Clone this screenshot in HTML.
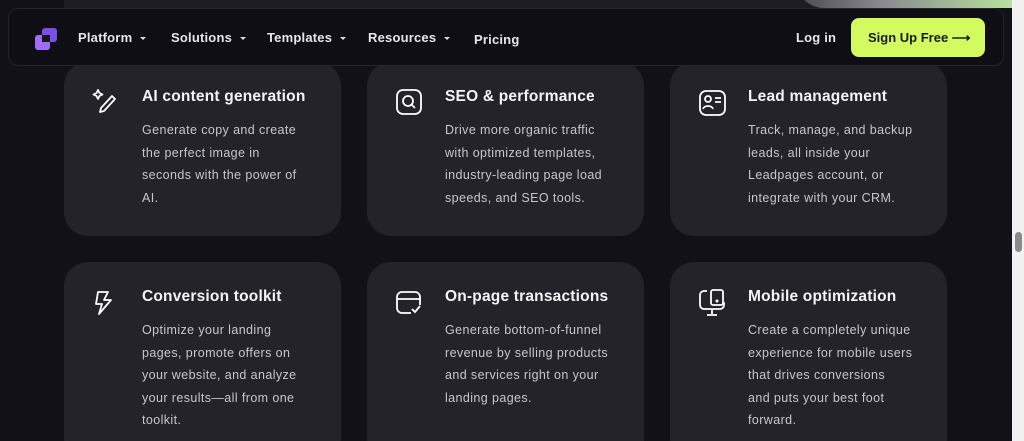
<!DOCTYPE html>
<html><head><style>
*{margin:0;padding:0;box-sizing:border-box}
html,body{width:1024px;height:441px;overflow:hidden;background:#121117;font-family:"Liberation Sans",sans-serif;position:relative}
.top{position:absolute;left:64px;top:0;width:884px;height:8px;background:#1e1d24}
.img{position:absolute;left:732px;top:-20px;width:216px;height:28px;border-radius:0 0 0 60px;background:linear-gradient(90deg,#4a4950,#8a8a90 40%,#b8e0a0)}
.nav{position:absolute;left:8px;top:8px;width:996px;height:58px;background:#0f0e14;border:1px solid #26252c;border-radius:10px;z-index:5}
.nav a{position:absolute;top:21px;color:#e6e6ea;font-size:13px;font-weight:bold;letter-spacing:.2px}
.caret{display:inline-block;margin-left:8px;border-left:3px solid transparent;border-right:3px solid transparent;border-top:3px solid #ddd;vertical-align:middle}
.btn{position:absolute;left:842px;top:9px;width:134px;height:39px;background:#d2fb60;border-radius:8px;color:#1a1a1a;font-size:13px;font-weight:bold;line-height:39px;padding-left:17px}
.card{position:absolute;width:277px;height:174px;background:#242329;border-radius:24px}
.card h3{position:absolute;left:78px;top:26px;color:#f4f4f6;font-size:15.5px;font-weight:bold;letter-spacing:.2px;white-space:nowrap}
.card p{position:absolute;left:78px;top:57px;color:#c6c6cc;font-size:12.5px;line-height:22.5px;letter-spacing:.4px;white-space:nowrap}
.card svg{position:absolute;left:28px;top:26px}
.sb{position:absolute;left:1012px;top:0;width:12px;height:441px;background:#f1f1f1}
</style></head><body>
<div class="top"><div class="img"></div></div>
<div class="nav">
<svg style="position:absolute;left:25px;top:18px" width="24" height="24" viewBox="0 0 24 24"><rect x="8" y="1" width="15" height="14" rx="3" fill="#7a4ee8"/><rect x="1" y="8" width="15" height="15" rx="3" fill="#a06cf5"/><rect x="8" y="8" width="8" height="7" fill="#17151e"/></svg>
<a style="left:69px">Platform<span class="caret"></span></a>
<a style="left:162px">Solutions<span class="caret"></span></a>
<a style="left:258px">Templates<span class="caret"></span></a>
<a style="left:359px">Resources<span class="caret"></span></a>
<a style="left:465px;top:23px">Pricing</a>
<a style="left:787px">Log in</a>
<div class="btn">Sign Up Free ⟶</div>
</div>
<div class="card" style="left:64px;top:62px"><svg width="26" height="28" viewBox="0 0 26 28" fill="none" stroke="#fff" stroke-width="1.8" stroke-linejoin="round"><path d="M6 2l1.5 3 3 1.5-3 1.5L6 11 4.5 8 1.5 6.5l3-1.5z"/><path d="M20 8l3 3-11 12-4 1 1-4z"/></svg><h3>AI content generation</h3><p>Generate copy and create<br>the perfect image in<br>seconds with the power of<br>AI.</p></div>
<div class="card" style="left:367px;top:62px"><svg width="28" height="28" viewBox="0 0 28 28" fill="none" stroke="#fff" stroke-width="1.8"><rect x="2" y="2" width="24" height="24" rx="6"/><circle cx="13" cy="13" r="5"/><path d="M17 17l3 3"/></svg><h3>SEO &amp; performance</h3><p>Drive more organic traffic<br>with optimized templates,<br>industry-leading page load<br>speeds, and SEO tools.</p></div>
<div class="card" style="left:670px;top:62px"><svg width="28" height="28" viewBox="0 0 28 28" fill="none" stroke="#fff" stroke-width="1.8"><rect x="2" y="3" width="25" height="24" rx="6"/><circle cx="10" cy="11" r="3"/><path d="M5 21c1-4 9-4 10 0M17 10h6M17 14h6"/></svg><h3>Lead management</h3><p>Track, manage, and backup<br>leads, all inside your<br>Leadpages account, or<br>integrate with your CRM.</p></div>
<div class="card" style="left:64px;top:262px;height:200px"><svg width="26" height="28" viewBox="0 0 26 28" fill="none" stroke="#fff" stroke-width="1.8" stroke-linejoin="round"><path d="M6 4h10l-4 8h7L7 26l3-10H4z"/></svg><h3>Conversion toolkit</h3><p>Optimize your landing<br>pages, promote offers on<br>your website, and analyze<br>your results—all from one<br>toolkit.</p></div>
<div class="card" style="left:367px;top:262px;height:200px"><svg width="28" height="28" viewBox="0 0 28 28" fill="none" stroke="#fff" stroke-width="1.8"><path d="M16 25H7a5 5 0 0 1-5-5V9a5 5 0 0 1 5-5h13a5 5 0 0 1 5 5v8M2 11h23M17 21l3 3 5-6"/></svg><h3>On-page transactions</h3><p>Generate bottom-of-funnel<br>revenue by selling products<br>and services right on your<br>landing pages.</p></div>
<div class="card" style="left:670px;top:262px;height:200px"><svg width="28" height="30" viewBox="0 0 28 30" fill="none" stroke="#fff" stroke-width="1.8"><path d="M9 3H6a4 4 0 0 0-4 4v10a4 4 0 0 0 4 4h16a4 4 0 0 0 4-4V14M14 21v5M9 27h10"/><rect x="13" y="2" width="12" height="15" rx="2"/><circle cx="19" cy="13" r=".6" fill="#fff"/></svg><h3>Mobile optimization</h3><p>Create a completely unique<br>experience for mobile users<br>that drives conversions<br>and puts your best foot<br>forward.</p></div>
<div class="sb"><div style="position:absolute;left:3px;top:232px;width:7px;height:20px;background:#8a8a8a;border-radius:4px"></div></div>
</body></html>
